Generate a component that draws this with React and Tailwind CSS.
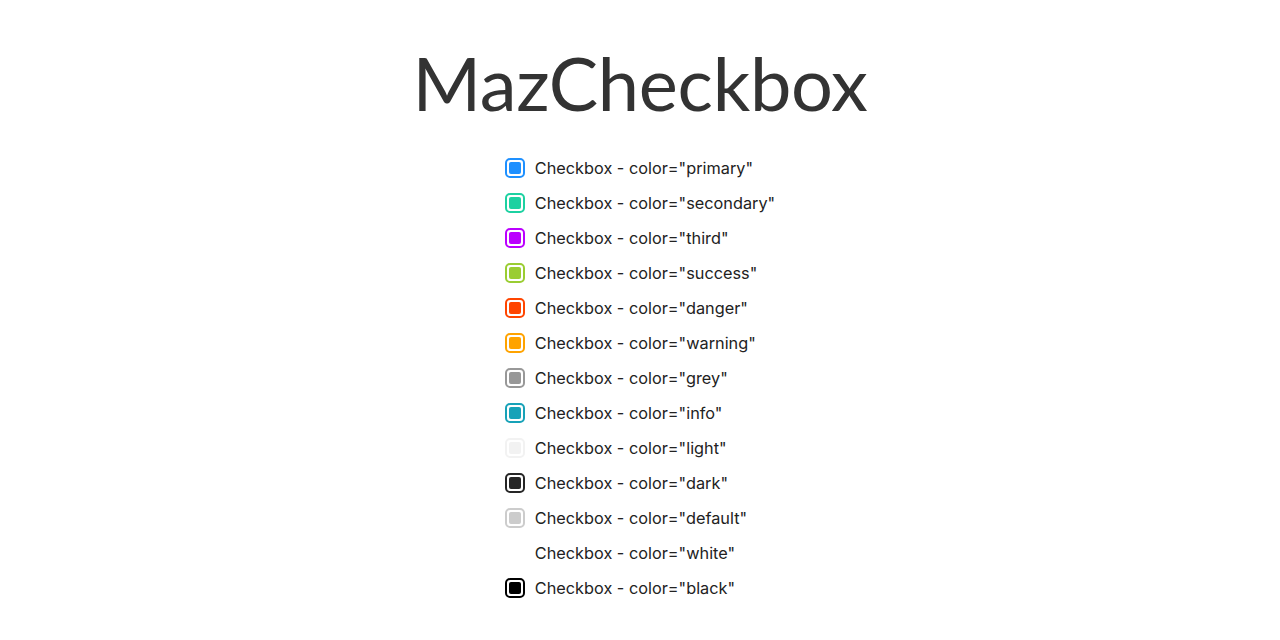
import React from "react";

const items = [
  { name: "primary", b: "border-[#1e90ff]", f: "bg-[#1e90ff]" },
  { name: "secondary", b: "border-[#1cd1a1]", f: "bg-[#1cd1a1]" },
  { name: "third", b: "border-[#bb00ff]", f: "bg-[#bb00ff]" },
  { name: "success", b: "border-[#9acd32]", f: "bg-[#9acd32]" },
  { name: "danger", b: "border-[#ff4500]", f: "bg-[#ff4500]" },
  { name: "warning", b: "border-[#ffa300]", f: "bg-[#ffa300]" },
  { name: "grey", b: "border-[#989898]", f: "bg-[#989898]" },
  { name: "info", b: "border-[#17a2b8]", f: "bg-[#17a2b8]" },
  { name: "light", b: "border-[#f2f2f2]", f: "bg-[#f2f2f2]" },
  { name: "dark", b: "border-[#262626]", f: "bg-[#262626]" },
  { name: "default", b: "border-[#cccccc]", f: "bg-[#cccccc]" },
  { name: "white", b: "border-[#ffffff]", f: "bg-[#ffffff]" },
  { name: "black", b: "border-[#000000]", f: "bg-[#000000]" },
];

export default function App() {
  return (
    <div className="w-[1280px] h-[640px] bg-white flex flex-col items-center font-['Inter',sans-serif]">
      <h1 className="mt-[35px] text-[74px] leading-[96px] text-[#333333] font-normal tracking-[-0.3px] font-['Lato',sans-serif]">
        MazCheckbox
      </h1>
      <div className="mt-[27px] flex flex-col gap-[15px]">
        {items.map((it) => (
          <label key={it.name} className="flex items-center h-[20px] gap-[10px] text-[16.3px] text-[#222222]">
            <span className={"w-[20px] h-[20px] rounded-[5px] border-2 flex items-center justify-center shrink-0 " + it.b}>
              <span className={"w-[12px] h-[12px] rounded-[2px] " + it.f} />
            </span>
            <span>Checkbox - color="{it.name}"</span>
          </label>
        ))}
      </div>
    </div>
  );
}
